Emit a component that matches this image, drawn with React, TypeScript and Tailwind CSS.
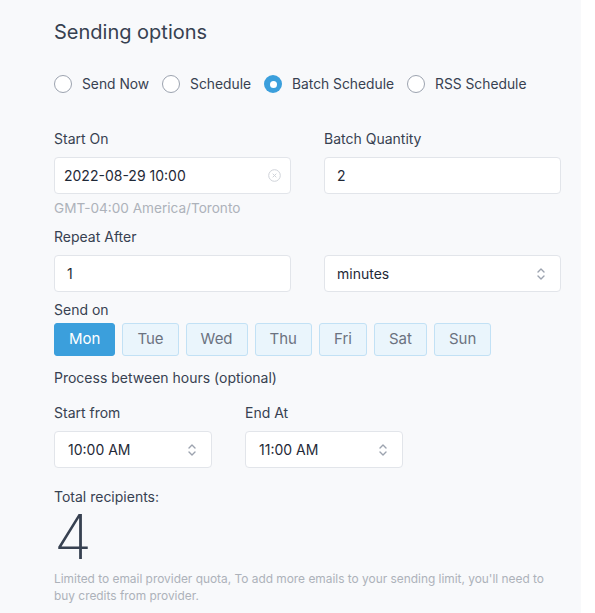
import React, { useState } from "react";

const days = ["Mon", "Tue", "Wed", "Thu", "Fri", "Sat", "Sun"];
const modes = ["Send Now", "Schedule", "Batch Schedule", "RSS Schedule"];

const UpDown = () => (
  <svg width="10" height="16" viewBox="0 0 10 16" fill="none" stroke="#9ca3af" strokeWidth="1.4" strokeLinecap="round" strokeLinejoin="round">
    <path d="M2 6l3-3 3 3" />
    <path d="M2 10l3 3 3-3" />
  </svg>
);

const Radio = ({ label, checked, onClick }: { label: string; checked: boolean; onClick: () => void }) => (
  <button onClick={onClick} className="flex items-center gap-[10px] mr-[13px] whitespace-nowrap shrink-0">
    {checked ? (
      <span className="w-[18px] h-[18px] rounded-full bg-[#3b9fdc] flex items-center justify-center">
        <span className="w-[7px] h-[7px] rounded-full bg-white" />
      </span>
    ) : (
      <span className="w-[18px] h-[18px] rounded-full border-[1.5px] border-[#9ca3af] bg-white" />
    )}
    <span className="text-[13.8px] text-[#374151]">{label}</span>
  </button>
);

const Label = ({ children }: { children: React.ReactNode }) => (
  <div className="text-[14px] leading-5 text-[#374151]">{children}</div>
);

const Box = ({ children, className = "" }: { children: React.ReactNode; className?: string }) => (
  <div className={`h-[37px] bg-white border border-[#e2e5ea] rounded-[4px] flex items-center text-[14px] text-[#1f2937] ${className}`}>
    {children}
  </div>
);

export default function App() {
  const [mode, setMode] = useState("Batch Schedule");
  const [day, setDay] = useState("Mon");

  return (
    <div className="flex min-h-[613px] bg-white" style={{ fontFamily: "Inter, 'Noto Sans', sans-serif" }}>
      <div className="w-[581px] bg-[#f8f9fb] pl-[54px] pt-5">
        <div className="w-[507px]">
          <h2 className="text-[20px] leading-6 text-[#374151]">Sending options</h2>

          <div className="flex items-center mt-[30px] h-5">
            {modes.map((m) => (
              <Radio key={m} label={m} checked={mode === m} onClick={() => setMode(m)} />
            ))}
          </div>

          <div className="grid grid-cols-2 gap-x-[33px] mt-[35px]">
            <div>
              <Label>Start On</Label>
              <Box className="mt-2 pl-[9px] pr-[9px] justify-between">
                <span>2022-08-29 10:00</span>
                <svg width="13" height="13" viewBox="0 0 13 13" fill="none" stroke="#cfd3d9" strokeWidth="1">
                  <circle cx="6.5" cy="6.5" r="5.8" />
                  <path d="M4.7 4.7l3.6 3.6M8.3 4.7l-3.6 3.6" />
                </svg>
              </Box>
              <div className="text-[13.6px] leading-5 text-[#adb2ba] mt-1">GMT-04:00 America/Toronto</div>
            </div>
            <div>
              <Label>Batch Quantity</Label>
              <Box className="mt-2 pl-[12px]">2</Box>
            </div>
          </div>

          <div className="mt-[9px]">
            <Label>Repeat After</Label>
            <div className="grid grid-cols-2 gap-x-[33px] mt-2">
              <Box className="pl-[12px]">1</Box>
              <Box className="pl-[12px] pr-[14px] justify-between">
                <span>minutes</span>
                <UpDown />
              </Box>
            </div>
          </div>

          <div className="mt-2">
            <Label>Send on</Label>
            <div className="flex gap-[7px] mt-[3px]">
              {days.map((d) => (
                <button
                  key={d}
                  onClick={() => setDay(d)}
                  className={`h-[33px] px-[14px] rounded-[3px] border text-[15px] ${
                    day === d
                      ? "bg-[#3b9fdc] border-[#3b9fdc] text-white"
                      : "bg-[#eaf5fc] border-[#c2e1f5] text-[#6b7280]"
                  }`}
                >
                  {d}
                </button>
              ))}
            </div>
          </div>

          <div className="mt-3">
            <Label>Process between hours (optional)</Label>
          </div>

          <div className="flex gap-[33px] mt-[15px]">
            <div className="w-[158px]">
              <Label>Start from</Label>
              <Box className="mt-2 pl-[13px] pr-[14px] justify-between">
                <span>10:00 AM</span>
                <UpDown />
              </Box>
            </div>
            <div className="w-[158px]">
              <Label>End At</Label>
              <Box className="mt-2 pl-[13px] pr-[14px] justify-between">
                <span>11:00 AM</span>
                <UpDown />
              </Box>
            </div>
          </div>

          <div className="mt-[19px]">
            <Label>Total recipients:</Label>
            <div className="mt-1 text-[62px] leading-[52px] font-extralight text-[#374151]">4</div>
            <p className="text-[11.9px] leading-[17px] text-[#adb2ba] mt-[7px]">
              Limited to email provider quota, To add more emails to your sending limit, you'll need to buy credits from provider.
            </p>
          </div>
        </div>
      </div>
      <div className="flex-1 bg-white" />
    </div>
  );
}
